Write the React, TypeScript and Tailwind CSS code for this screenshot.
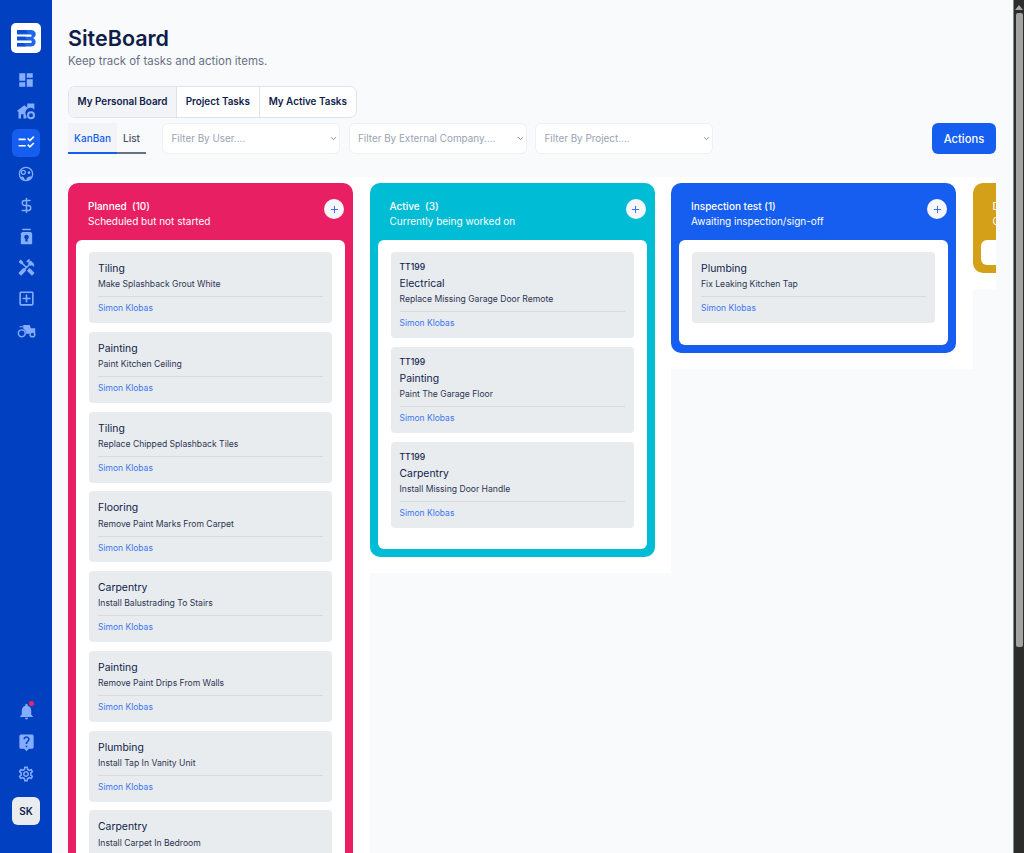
import React from "react";
import { MdDashboard, MdChecklistRtl, MdHandyman, MdOutlineAddBox, MdNotifications, MdLiveHelp, MdOutlineSettings } from "react-icons/md";
import { LuDollarSign, LuChevronDown, LuPlus } from "react-icons/lu";

const Logo = () => (
  <svg viewBox="0 0 30 30" className="w-[30px] h-[30px]">
    <rect width="30" height="30" rx="5" fill="#fff" />
    <path d="M6 7h14.500a4.200 4.200 0 0 1 3 7.200L22 15l1.500 1a4.400 4.400 0 0 1-3 7.400H6v-3.400h13.500a1.300 1.300 0 0 0 0-2.600H6v-3.600h13.500a1.200 1.200 0 0 0 0-2.400H6z" fill="#1f66ee" />
    <path d="M6 7h9l2 3.400H6zM6 13.400h8l2 3.600H6zM6 20h7l2 3.400H6z" fill="#0040c1" opacity=".6" />
  </svg>
);
const HomeCog = ({ className }: { className: string }) => (
  <svg viewBox="0 0 24 24" className={className} fill="currentColor">
    <path d="M1 12 10 5l3.500 2.700V3H22v7.500a6 6 0 0 0-9.500 7.500V21H9v-5H6v5H3v-8z" />
    <circle cx="18" cy="17" r="3.600" fill="none" stroke="currentColor" strokeWidth="2.400" />
  </svg>
);
const FaceDial = ({ className }: { className: string }) => (
  <svg viewBox="0 0 24 24" className={className} fill="none" stroke="currentColor" strokeWidth="2">
    <circle cx="12" cy="12" r="10" />
    <circle cx="8" cy="9.500" r="3" fill="none" strokeWidth="1.800" />
    <circle cx="16.500" cy="10" r="2" fill="currentColor" stroke="none" />
    <path d="M4 17c2.500-2.500 5-2 6.500 4.500l2 .5c-.5-3.500 2.500-7 8-6l-1 3-5 3.500h-5l-4-2.500z" fill="currentColor" stroke="none" />
  </svg>
);
const Jar = ({ className }: { className: string }) => (
  <svg viewBox="0 0 24 24" className={className} fill="currentColor">
    <rect x="6" y="1" width="12" height="2" rx=".5" />
    <path fillRule="evenodd" d="M6 5.500h12l2 2V22a1 1 0 0 1-1 1H5a1 1 0 0 1-1-1V7.500zM12 9.500a3.200 3.200 0 0 0-1.600 6V19h3.200v-3.500A3.200 3.200 0 0 0 12 9.500z" />
  </svg>
);
const Tractor = ({ className }: { className: string }) => (
  <svg viewBox="0 0 24 24" className={className} fill="currentColor">
    <circle cx="6" cy="15.500" r="4.300" fill="none" stroke="currentColor" strokeWidth="1.800" />
    <circle cx="19.500" cy="17" r="3" fill="none" stroke="currentColor" strokeWidth="1.800" />
    <path d="M3 6.500h5V5h8l1.500 4H23v6.500l-1 .2a4.200 4.200 0 0 0-6.500 .3h-4.200A6.300 6.300 0 0 0 8 9.800V8H3z" />
  </svg>
);

const navIcons: React.ReactNode[] = [
  <MdDashboard className="w-[18px] h-[18px]" />,
  <HomeCog className="w-[20px] h-[20px]" />,
  <MdChecklistRtl className="w-[19px] h-[19px] text-white" />,
  <FaceDial className="w-[16px] h-[16px]" />,
  <LuDollarSign className="w-[17px] h-[17px]" />,
  <Jar className="w-[17px] h-[17px]" />,
  <MdHandyman className="w-[19px] h-[19px]" />,
  <MdOutlineAddBox className="w-[19px] h-[19px]" />,
  <Tractor className="w-[19px] h-[19px]" />,
];

type Task = { code?: string; title: string; desc: string };
type Column = { name: string; sub: string; header: string; tasks: Task[] };

const columns: Column[] = [
  {
    name: "Planned\u00a0 (10)",
    sub: "Scheduled but not started",
    header: "bg-[#e91f63]",
    tasks: [
      { title: "Tiling", desc: "Make Splashback Grout White" },
      { title: "Painting", desc: "Paint Kitchen Ceiling" },
      { title: "Tiling", desc: "Replace Chipped Splashback Tiles" },
      { title: "Flooring", desc: "Remove Paint Marks From Carpet" },
      { title: "Carpentry", desc: "Install Balustrading To Stairs" },
      { title: "Painting", desc: "Remove Paint Drips From Walls" },
      { title: "Plumbing", desc: "Install Tap In Vanity Unit" },
      { title: "Carpentry", desc: "Install Carpet In Bedroom" },
    ],
  },
  {
    name: "Active\u00a0 (3)",
    sub: "Currently being worked on",
    header: "bg-[#00bcd4]",
    tasks: [
      { code: "TT199", title: "Electrical", desc: "Replace Missing Garage Door Remote" },
      { code: "TT199", title: "Painting", desc: "Paint The Garage Floor" },
      { code: "TT199", title: "Carpentry", desc: "Install Missing Door Handle" },
    ],
  },
  {
    name: "Inspection test (1)",
    sub: "Awaiting inspection/sign-off",
    header: "bg-[#155eef]",
    tasks: [{ title: "Plumbing", desc: "Fix Leaking Kitchen Tap" }],
  },
];

function Card({ task }: { task: Task }) {
  return (
    <div className="bg-[#e9ecef] rounded-[4px] px-[9px] pt-[8px] pb-[7.750px]">
      {task.code && <div className="text-[8.600px] leading-[15px] font-medium text-[#101c4a]">{task.code}</div>}
      <div className="text-[10.400px] leading-[17.250px] text-[#101c4a]">{task.title}</div>
      <div className="text-[8.600px] leading-[14px] text-[#2b3553]">{task.desc}</div>
      <div className="h-px bg-[#d5d9e0] mt-[5px] mb-[4px]" />
      <div className="text-[8.500px] leading-[14px] text-[#3b76f0]">Simon Klobas</div>
    </div>
  );
}

function BoardColumn({ col }: { col: Column }) {
  return (
    <div className="shrink-0 self-start bg-white pt-[6px] pb-4 pr-[16.500px]">
      <div className={`w-[285px] rounded-[10px] px-2 pb-2 ${col.header}`}>
        <div className="relative h-[57px] pl-3 pt-[16px] text-white">
          <div className="text-[10px] leading-[15px] font-medium">{col.name}</div>
          <div className="text-[10px] leading-[15px]">{col.sub}</div>
          <button className="absolute right-px top-[16px] w-5 h-5 rounded-full bg-[#f5f7fb] flex items-center justify-center text-[#2f66e0]">
            <LuPlus className="w-[11px] h-[11px]" />
          </button>
        </div>
        <div className="bg-white rounded-[6px] px-[13px] pt-[12px] pb-[13px] flex flex-col gap-[8.750px]">
          {col.tasks.map((t, i) => (
            <Card key={i} task={t} />
          ))}
          <div className="h-0" />
        </div>
      </div>
    </div>
  );
}

function Filter({ label, w }: { label: string; w: string }) {
  return (
    <div className={`${w} h-[31px] bg-white rounded-[6px] border border-[#eef0f4] flex items-center justify-between pl-[8.500px] pr-px text-[9.900px] text-[#98a2b3]`}>
      <span>{label}</span>
      <LuChevronDown className="w-[9px] h-[9px] text-[#667085]" />
    </div>
  );
}

export default function App() {
  return (
    <div className="flex h-[853px] overflow-hidden bg-[#f9fafc] font-['Inter',sans-serif] text-[#101c4a]">
      <aside className="w-[52px] shrink-0 bg-[#0040c1] flex flex-col items-center pt-[22.500px] pb-[28px] text-[#84adff]">
        <Logo />
        <nav className="mt-[12px] flex flex-col">
          {navIcons.map((icon, i) => (
            <div key={i} className="h-[31.250px] w-7 flex items-center justify-center">
              {i === 2 ? (
                <span className="w-7 h-7 rounded-[6px] bg-[#155eef] flex items-center justify-center">{icon}</span>
              ) : (
                icon
              )}
            </div>
          ))}
        </nav>
        <div className="mt-auto flex flex-col items-center">
          <div className="relative h-[31px] w-7 flex items-center justify-center">
            <MdNotifications className="w-[19px] h-[19px]" />
            <span className="absolute top-[5px] right-[6px] w-[5px] h-[5px] rounded-full bg-[#f0245f]" />
          </div>
          <div className="h-[31px] w-7 flex items-center justify-center">
            <MdLiveHelp className="w-[19px] h-[19px]" />
          </div>
          <div className="h-[31px] w-7 flex items-center justify-center">
            <MdOutlineSettings className="w-[18px] h-[18px]" />
          </div>
          <div className="mt-[8px] w-7 h-7 rounded-[6px] bg-[#e9ecef] flex items-center justify-center text-[10px] font-semibold text-[#101c4a]">
            SK
          </div>
        </div>
      </aside>

      <main className="flex-1 min-w-0 pl-4 pr-[17px] pt-[24px] overflow-hidden">
        <h1 className="text-[21.500px] leading-[28px] font-semibold text-[#101c4a]">SiteBoard</h1>
        <p className="text-[11.430px] leading-[16px] text-[#667085] mt-[1px]">Keep track of tasks and action items.</p>

        <div className="mt-[17px] inline-flex h-[32px] rounded-[7px] border border-[#dfe3ea] bg-white overflow-hidden text-[9.900px] font-semibold text-[#101c4a] align-top">
          <div className="w-[108px] pb-px bg-[#f2f4f7] flex items-center justify-center border-r border-[#dfe3ea]">My Personal Board</div>
          <div className="w-[82.500px] pb-px flex items-center justify-center border-r border-[#dfe3ea]">Project Tasks</div>
          <div className="w-[96.500px] pb-px flex items-center justify-center">My Active Tasks</div>
        </div>

        <div className="mt-[5px] flex items-center h-[31px]">
          <div className="flex h-[31px] w-[78px] text-[10px] font-medium">
            <div className="w-[49px] pt-[2px] bg-[#f2f4f7] border-b-2 border-[#155eef] text-[#155eef] flex items-center justify-center">KanBan</div>
            <div className="w-[29px] pt-[2px] border-b-2 border-[#667085] text-[#475467] flex items-center justify-center">List</div>
          </div>
          <div className="ml-[16px] flex gap-[8.500px]">
            <Filter label="Filter By User...." w="w-[178px]" />
            <Filter label="Filter By External Company...." w="w-[178px]" />
            <Filter label="Filter By Project...." w="w-[178px]" />
          </div>
          <button className="ml-auto w-[64px] h-[31px] pt-px rounded-[6px] bg-[#155eef] text-white text-[11.200px] font-medium">Actions</button>
        </div>

        <div className="mt-[23px] flex overflow-hidden">
          {columns.map((c) => (
            <BoardColumn key={c.name} col={c} />
          ))}
          <div className="shrink-0 self-start bg-white pt-[6px] pb-4">
            <div className="w-[285px] rounded-[10px] px-2 pb-2 bg-[#d4a017]">
              <div className="h-[57px] pl-3 pt-[16px] text-white">
                <div className="text-[10px] leading-[15px] font-medium">Done (0)</div>
                <div className="text-[10px] leading-[15px]">Completed</div>
              </div>
              <div className="bg-white rounded-[6px] h-[25px]" />
            </div>
          </div>
        </div>
      </main>

      <div className="w-[11px] shrink-0 bg-[#2c2c2c] border-l border-[#8a8a8a] flex flex-col items-center pt-[5px]">
        <div className="w-0 h-0 border-x-[4px] border-x-transparent border-b-[5px] border-b-[#a8a8a8]" />
        <div className="mt-[3px] w-[7px] h-[634px] rounded-[2px] bg-[#a3a3a3]" />
      </div>
    </div>
  );
}
